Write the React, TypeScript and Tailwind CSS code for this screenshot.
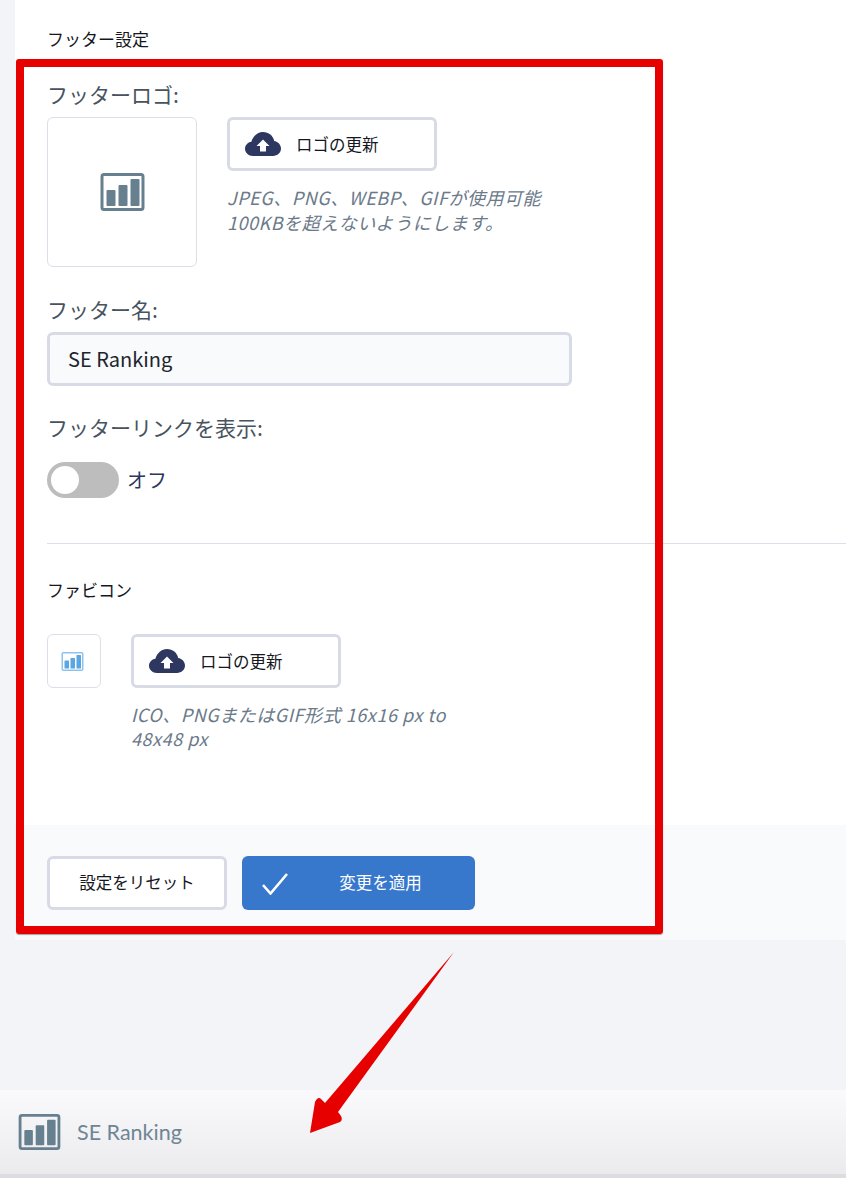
const jp = "font-['Noto_Sans_CJK_JP','Noto_Sans',sans-serif]";

function BarsIcon({ className, frame, bars }: { className: string; frame: string; bars: string }) {
  return (
    <svg viewBox="0 0 44 38" className={className}>
      <rect x="1.5" y="1.5" width="41" height="35" rx="2" fill="none" stroke={frame} strokeWidth="3" />
      <rect x="6" y="17" width="9" height="16" rx="1" fill={bars} />
      <rect x="18" y="12" width="9" height="21" rx="1" fill={bars} />
      <rect x="30" y="6" width="9" height="27" rx="1" fill={bars} />
    </svg>
  );
}

function UploadButton() {
  return (
    <button className="flex h-[54px] w-[210px] items-center rounded-[6px] border-[3px] border-[#d8dbe6] bg-white pl-[15px]">
      <svg viewBox="0 0 36 24" className="h-6 w-9">
        <path
          d="M8 24C3.5 24 0 20.8 0 16.8c0-3.6 2.7-6.6 6.4-7.1C8 4 12.6 0 18 0c5.6 0 10.2 3.8 11.2 9 3.9.6 6.8 3.8 6.8 7.6 0 4.2-3.6 7.4-8 7.4z"
          fill="#2d3760"
        />
        <path d="M18 7.5l6.5 6.5H21v5.5h-6V14h-3.5z" fill="#fff" />
      </svg>
      <span className="ml-[15px] text-[16.5px] leading-[24px] font-normal text-[#15181e]">ロゴの更新</span>
    </button>
  );
}

export default function App() {
  return (
    <div className={`relative h-[1178px] w-[846px] overflow-hidden bg-[#f2f4f8] ${jp}`}>
      <div className="ml-[15px]">
        <div className="h-[825px] bg-white pl-[32px] pt-[29px]">
          <h2 className="text-[17px] leading-[20px] font-normal text-[#15181e]">フッター設定</h2>

          <div className="mt-[32px] text-[21px] leading-[26px] text-[#47535f]">フッターロゴ:</div>
          <div className="mt-[10px] flex">
            <div className="flex h-[150px] w-[150px] items-center justify-center rounded-[6px] border border-[#dcdee8]">
              <BarsIcon className="h-[38px] w-[45px]" frame="#67808f" bars="#67808f" />
            </div>
            <div className="ml-[30px]">
              <UploadButton />
              <p className="mt-[14px] text-[18px] leading-[25px] tracking-[0.55px] text-[#6b7a89] italic">
                JPEG、PNG、WEBP、GIFが使用可能
                <br />
                100KBを超えないようにします。
              </p>
            </div>
          </div>

          <div className="mt-[29px] text-[21px] leading-[26px] text-[#47535f]">フッター名:</div>
          <div className="mt-[10px] flex h-[54px] w-[525px] items-center rounded-[6px] border-[3px] border-[#d8dbe6] bg-[#f9fafc] pl-[18px] text-[20px] text-[#20242c]">
            SE Ranking
          </div>

          <div className="mt-[28px] text-[21px] leading-[26px] text-[#47535f]">フッターリンクを表示:</div>
          <div className="mt-[22px] flex items-center">
            <div className="flex h-[36px] w-[72px] items-center rounded-full bg-[#bdbdbd] pl-[4px]">
              <div className="h-[28px] w-[28px] rounded-full bg-white" />
            </div>
            <span className="ml-[8px] text-[20px] text-[#2d3760]">オフ</span>
          </div>

          <div className="mt-[45px] h-px bg-[#dcdee8]" />

          <h2 className="mt-[36px] text-[17px] leading-[20px] font-normal text-[#15181e]">ファビコン</h2>

          <div className="mt-[34px] flex">
            <div className="flex h-[54px] w-[54px] items-center justify-center rounded-[6px] border border-[#dcdee8]">
              <BarsIcon className="mr-[3px] h-[19px] w-[23px]" frame="#8fc3ee" bars="#5aa5e3" />
            </div>
            <div className="ml-[30px]">
              <UploadButton />
              <p className="mt-[14px] w-[330px] text-[18px] leading-[24px] tracking-[0.55px] text-[#6b7a89] italic">
                ICO、PNGまたはGIF形式 16x16 px to 48x48 px
              </p>
            </div>
          </div>
        </div>

        <div className="flex h-[115px] gap-[15px] bg-[#f9fafc] pl-[32px] pt-[31px]">
          <button className="h-[54px] w-[180px] rounded-[6px] border-[3px] border-[#d8dbe6] bg-white pb-[2px] text-[16.5px] font-normal text-[#15181e]">
            設定をリセット
          </button>
          <button className="relative h-[54px] w-[233px] rounded-[6px] bg-[#3778cd] pb-[2px] pl-[44px] text-[16.5px] font-normal text-white">
            <svg viewBox="0 0 26 22" className="absolute top-[17px] left-[20px] h-[22px] w-[26px]" fill="none" stroke="#fff" strokeWidth="2.6">
              <path d="M1 12l7.5 8.5L25 1" />
            </svg>
            変更を適用
          </button>
        </div>
      </div>

      <div className="mt-[150px] flex h-[88px] items-start border-b-4 border-[#dcdde1] bg-gradient-to-b from-[#fafafc] to-[#ebebee] pl-[18px] pt-[24px]">
        <BarsIcon className="h-[36px] w-[43px]" frame="#67808f" bars="#67808f" />
        <span className="ml-[16px] font-['Lato',sans-serif] text-[21.5px] leading-[36px] text-[#6f8594]">SE Ranking</span>
      </div>

      {/* annotation overlay */}
      <div className="absolute top-[59px] left-[16px] h-[875px] w-[647px] rounded-[3px] border-[8px] border-[#e60000] shadow-[0_1px_1px_rgba(0,0,0,0.35)]" />
      <svg className="absolute top-0 left-0 h-[1178px] w-[846px]" viewBox="0 0 846 1178">
        <path
          d="M454 952 L338 1112 L341 1116 Q343 1120 340 1122 L310 1133 L315 1102 Q318 1096 321 1099 L325 1103 Z"
          fill="#e60000"
        />
      </svg>
    </div>
  );
}
